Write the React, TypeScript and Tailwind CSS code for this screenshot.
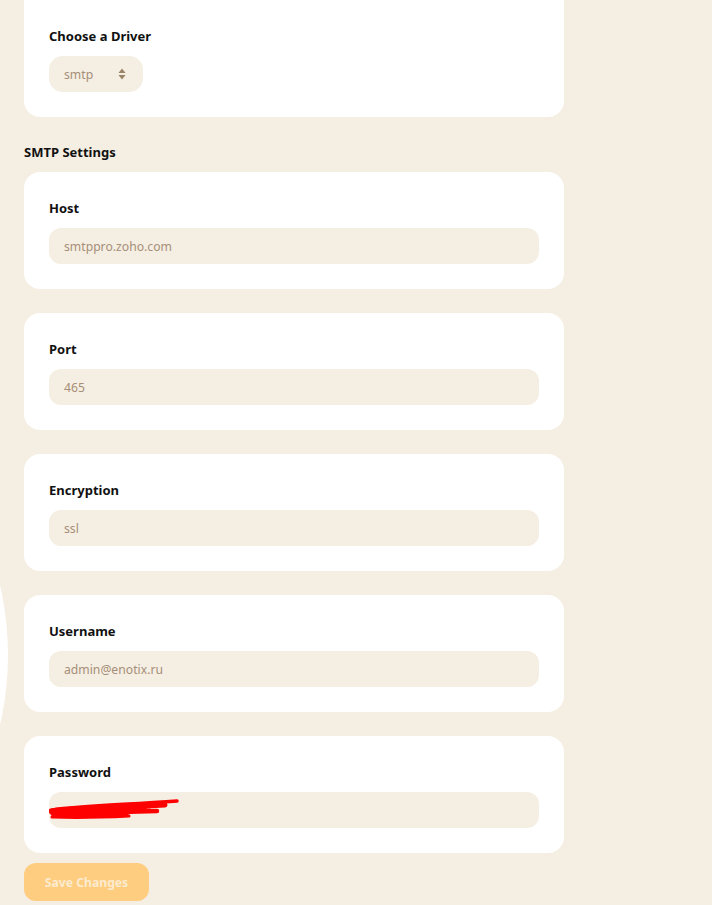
import React from "react";

const fields = [
  { label: "Host", value: "smtppro.zoho.com" },
  { label: "Port", value: "465" },
  { label: "Encryption", value: "ssl" },
  { label: "Username", value: "admin@enotix.ru" },
];

const font = { fontFamily: '"Noto Sans", "Open Sans", sans-serif' };

function Field({ label, value }: { label: string; value: string }) {
  return (
    <div className="rounded-2xl bg-white px-[25px] pt-6 pb-[25px]">
      <div className="text-[13px] leading-6 font-bold text-[#111]">{label}</div>
      <div className="mt-2 flex h-9 items-center rounded-xl bg-[#f5eee3] pl-[15px] pt-[3px] text-[12.2px] text-[#a58f78]">
        {value}
      </div>
    </div>
  );
}

// Hand-drawn red marker strokes hiding the password value
function Scribble() {
  return (
    <svg width="140" height="28" viewBox="0 0 140 28" className="absolute left-0 top-[4px]">
      <g fill="none" stroke="#ff0000" strokeLinecap="round">
        <path d="M3 14 C 30 10, 70 9, 128 5" strokeWidth="3.5" />
        <path d="M2 15 C 40 13, 80 11, 116 9" strokeWidth="5" />
        <path d="M4 18 C 30 17, 60 16, 108 15" strokeWidth="4.5" />
        <path d="M3 21 C 30 22, 60 21, 80 20" strokeWidth="3" />
        <path d="M20 13 C 50 12, 80 11, 100 10" strokeWidth="5" />
        <path d="M6 19 C 20 20, 50 20, 78 19" strokeWidth="3.5" />
        <path d="M2 17 C 1 13, 10 12, 22 13" strokeWidth="3" />
        <path d="M40 16 C 60 15, 85 14, 95 13" strokeWidth="5" />
      </g>
    </svg>
  );
}

export default function App() {
  return (
    <div className="relative min-h-[905px] overflow-hidden bg-[#f5eee3]" style={font}>
      <div className="absolute left-[-612px] top-[345px] h-[620px] w-[620px] rounded-full bg-white" />
      <div className="relative ml-6 flex w-[540px] flex-col">
        <div className="-mt-6 rounded-2xl bg-white px-[25px] pt-12 pb-[25px]">
          <div className="text-[13px] leading-6 font-bold text-[#111]">Choose a Driver</div>
          <div className="mt-2 flex h-9 w-[94px] items-center justify-between rounded-[14px] bg-[#f5eee3] pl-[15px] pr-[17px] text-[12.2px] text-[#a58f78]">
            <span className="pt-[3px]">smtp</span>
            <svg width="8" height="12" viewBox="0 0 8 12">
              <path d="M4 0.5 L7.5 5 H0.5 Z" fill="#9a8468" />
              <path d="M4 11.5 L7.5 7 H0.5 Z" fill="#9a8468" />
            </svg>
          </div>
        </div>

        <div className="mt-[25px] mb-[10px] text-[13px] leading-5 font-bold text-[#111]">SMTP Settings</div>

        <div className="flex flex-col gap-6">
          {fields.map((f) => (
            <Field key={f.label} label={f.label} value={f.value} />
          ))}
          <div className="rounded-2xl bg-white px-[25px] pt-6 pb-[25px]">
            <div className="text-[13px] leading-6 font-bold text-[#111]">Password</div>
            <div className="relative mt-2 h-9 rounded-xl bg-[#f5eee3]">
              <Scribble />
            </div>
          </div>
        </div>

        <button className="mt-[10px] h-[38px] w-[125px] rounded-xl bg-[#fecd7f] pt-[2px] text-[12.2px] font-bold text-[#fdebcf]">
          Save Changes
        </button>
      </div>
    </div>
  );
}
